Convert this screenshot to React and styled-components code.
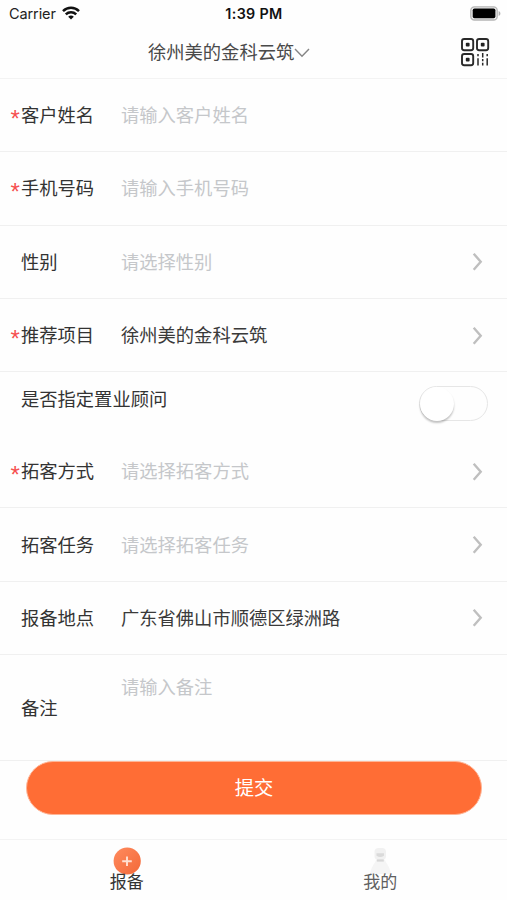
import React from "react";
import styled, { createGlobalStyle } from "styled-components";

const GlobalStyle = createGlobalStyle`
  * { box-sizing: border-box; }
  body {
    margin: 0;
    background: #fefefe;
    font-family: "Liberation Sans", "Noto Sans CJK SC", sans-serif;
    color: #333;
  }
  button, input, textarea { font: inherit; }
`;

const Screen = styled.div`
  display: flex;
  flex-direction: column;
  width: 507px;
  height: 900px;
  overflow: hidden;
  background: #fefefe;
`;

const StatusBar = styled.div`
  display: grid;
  grid-template-columns: 1fr auto 1fr;
  align-items: center;
  height: 27px;
  padding: 0 6px 0 9px;
  font: 15px/27px Inter, sans-serif;
  color: #222;
`;

const Carrier = styled.div`
  display: flex;
  align-items: center;
  gap: 6px;
  font-size: 14.5px;
  letter-spacing: -0.1px;
`;

const Clock = styled.div`
  margin-right: 2px;
  font-size: 14.3px;
  font-weight: 600;
  letter-spacing: 0.35px;
  color: #111;
`;

const BatterySlot = styled.div`
  display: flex;
  justify-content: flex-end;
`;

const Header = styled.header`
  display: flex;
  justify-content: space-between;
  align-items: center;
  height: 52px;
  padding: 0 17px 0 148px;
  border-bottom: 1px solid #f3f3f3;
`;

const Project = styled.button`
  display: flex;
  align-items: center;
  padding: 0;
  border: 0;
  background: none;
  font-size: 18.3px;
  line-height: 26px;
  color: #4a4a4a;
`;

const ScanButton = styled.button`
  display: flex;
  padding: 0 0 2px;
  border: 0;
  background: none;
`;

const Form = styled.main`
  display: flex;
  flex-direction: column;
`;

const Row = styled.div`
  display: flex;
  align-items: center;
  height: ${(p) => p.$height || 73.3}px;
  padding: 0 24px 0 10.5px;
  border-bottom: 1px solid #f0f0f0;
  font-size: 18.3px;
  line-height: 26px;
`;

const Label = styled.div`
  display: flex;
  flex: 0 0 110.5px;
  padding-top: 2px;
  color: #333;
`;

const Mark = styled.span`
  width: 10.5px;
  height: 26px;
  color: #f65050;
  font-family: "Liberation Sans", sans-serif;
  font-size: 24px;
  line-height: 31px;
`;

const Value = styled.div`
  flex: 1;
  padding-top: 2px;
  color: ${(p) => (p.$placeholder ? "#c5c7ca" : "#3a3a3a")};
`;

const SwitchRow = styled.div`
  display: flex;
  justify-content: space-between;
  align-items: flex-start;
  height: 63px;
  padding: 14px 19px 0 21px;
  font-size: 18.3px;
  line-height: 28px;
`;

const Switch = styled.button`
  display: flex;
  width: 69px;
  height: 35px;
  padding: 0;
  border: 1px solid #e6e6e6;
  border-radius: 18px;
  background: #fefefe;
`;

const Knob = styled.span`
  width: 34px;
  height: 34px;
  border-radius: 50%;
  background: #fff;
  box-shadow: 0 2px 2px rgba(0, 0, 0, 0.24);
`;

const NoteRow = styled(Row)`
  align-items: flex-start;
  padding-top: 18px;

  ${Label} {
    padding-top: 23px;
  }
`;

const Actions = styled.div`
  height: 79px;
  padding: 0 25px 0 26px;
  border-bottom: 1px solid #f3f3f3;
`;

const Submit = styled.button`
  display: block;
  width: 100%;
  height: 54px;
  padding: 1px 0 0;
  border: 1px solid #ffb596;
  border-radius: 27px;
  background: #ff6d35;
  color: #fff;
  font-size: 19.3px;
  line-height: 51px;
`;

const TabBar = styled.nav`
  display: grid;
  grid-template-columns: 1fr 1fr;
  flex: 1;
`;

const Tab = styled.div`
  display: flex;
  flex-direction: column;
  align-items: center;
  padding-top: 7px;
  font-size: 17px;
  line-height: 22px;
  color: ${(p) => (p.$active ? "#333" : "#606060")};

  svg { margin-bottom: -3px; }
`;

const WifiIcon = () => (
  <svg width="18" height="15" viewBox="0 0 18 15" fill="none" stroke="#111" strokeWidth="2.5">
    <path d="M1 5.1C5.5.7 12.5.7 17 5.1" />
    <path d="M3.8 8.4c2.9-2.8 7.5-2.8 10.4 0" />
    <path d="M6.2 10.7c1.6-1.5 4-1.5 5.6 0L9 13.6z" fill="#111" stroke="none" />
  </svg>
);

const BatteryIcon = () => (
  <svg width="31" height="15" viewBox="0 0 31 15">
    <rect x="0.8" y="0.8" width="26.4" height="13.2" rx="3.6" fill="#eee" stroke="#b5b5b5" strokeWidth="1.3" />
    <rect x="2.7" y="2.5" width="22.7" height="9.8" rx="1.8" fill="#000" />
    <path d="M28.6 5v5c2.4-.7 2.4-4.3 0-5z" fill="#b0b0b0" />
  </svg>
);

const ChevronDown = () => (
  <svg width="16" height="10" viewBox="0 0 16 10" fill="none" stroke="#858585" strokeWidth="1.4">
    <path d="M1 1l7 7.3L15 1" />
  </svg>
);

const ChevronRight = () => (
  <svg width="12" height="19" viewBox="0 0 12 19" fill="none" stroke="#bfbfbf" strokeWidth="2.4">
    <path d="M2.7 1.7l7 8-7 8" />
  </svg>
);

const CodeIcon = () => (
  <svg width="30" height="30" viewBox="0 0 30 30" fill="none" stroke="#292929" strokeWidth="1.9">
    <rect x="2" y="2" width="11.2" height="11.2" rx="2.2" />
    <rect x="17" y="2" width="11.2" height="11.2" rx="2.2" />
    <rect x="2" y="17" width="11.2" height="11.2" rx="2.2" />
    <g fill="#222" stroke="none">
      <rect x="5.8" y="5.8" width="3.8" height="3.8" rx="1" />
      <rect x="20.8" y="5.8" width="3.8" height="3.8" rx="1" />
      <rect x="5.8" y="20.8" width="3.8" height="3.8" rx="1" />
    </g>
    <path d="M18 17v2.2M18 21.3V28.5M22.7 16v4.5M22.7 22v2.2M22.7 25.8v2.7M27.2 17v2.2M27.2 21.3V28.5" strokeWidth="1.5" />
  </svg>
);

const ReportIcon = () => (
  <svg width="28" height="28" viewBox="0 0 28 28">
    <defs>
      <linearGradient id="report-fill" x1="0" y1="0" x2="1" y2="1">
        <stop stopColor="#ff8b5e" />
        <stop offset="1" stopColor="#f36838" />
      </linearGradient>
    </defs>
    <circle cx="14.2" cy="14" r="13.6" fill="url(#report-fill)" />
    <path d="M9.2 14.2h9.6M14 9.4V19" stroke="#ffe0d2" strokeWidth="1.9" />
  </svg>
);

const ProfileIcon = () => (
  <svg width="28" height="28" viewBox="0 0 28 28">
    <path d="M10 13C8.5 17 5 20 4 27h21c-1-7-4.5-10-6-14z" fill="#f5f5f5" />
    <rect x="8.5" y="1" width="11.5" height="12" rx="4" fill="#f1f1f1" />
    <path d="M10.5 6.2h7.5v2.5q-3.7 2.5-7.5 0z" fill="#dadada" />
    <path d="M10.8 13.5h7" stroke="#d7d7d7" strokeWidth="2.2" />
  </svg>
);

const Field = ({ label, required, value, placeholder, select, height }) => (
  <Row $height={height}>
    <Label>
      <Mark>{required ? "*" : ""}</Mark>
      {label}
    </Label>
    <Value $placeholder={!value}>{value || placeholder}</Value>
    {select && <ChevronRight />}
  </Row>
);

export default function App() {
  return (
    <Screen>
      <GlobalStyle />
      <StatusBar>
        <Carrier>Carrier <WifiIcon /></Carrier>
        <Clock>1:39 PM</Clock>
        <BatterySlot><BatteryIcon /></BatterySlot>
      </StatusBar>
      <Header>
        <Project>徐州美的金科云筑<ChevronDown /></Project>
        <ScanButton aria-label="二维码"><CodeIcon /></ScanButton>
      </Header>
      <Form>
        <Field label="客户姓名" required placeholder="请输入客户姓名" />
        <Field label="手机号码" required placeholder="请输入手机号码" />
        <Field label="性别" placeholder="请选择性别" select />
        <Field label="推荐项目" required value="徐州美的金科云筑" select />
        <SwitchRow>
          是否指定置业顾问
          <Switch role="switch" aria-checked="false"><Knob /></Switch>
        </SwitchRow>
        <Field label="拓客方式" required placeholder="请选择拓客方式" select />
        <Field label="拓客任务" placeholder="请选择拓客任务" select />
        <Field label="报备地点" value="广东省佛山市顺德区绿洲路" select />
        <NoteRow $height={106}>
          <Label><Mark />备注</Label>
          <Value $placeholder>请输入备注</Value>
        </NoteRow>
      </Form>
      <Actions>
        <Submit>提交</Submit>
      </Actions>
      <TabBar>
        <Tab $active><ReportIcon />报备</Tab>
        <Tab><ProfileIcon />我的</Tab>
      </TabBar>
    </Screen>
  );
}
